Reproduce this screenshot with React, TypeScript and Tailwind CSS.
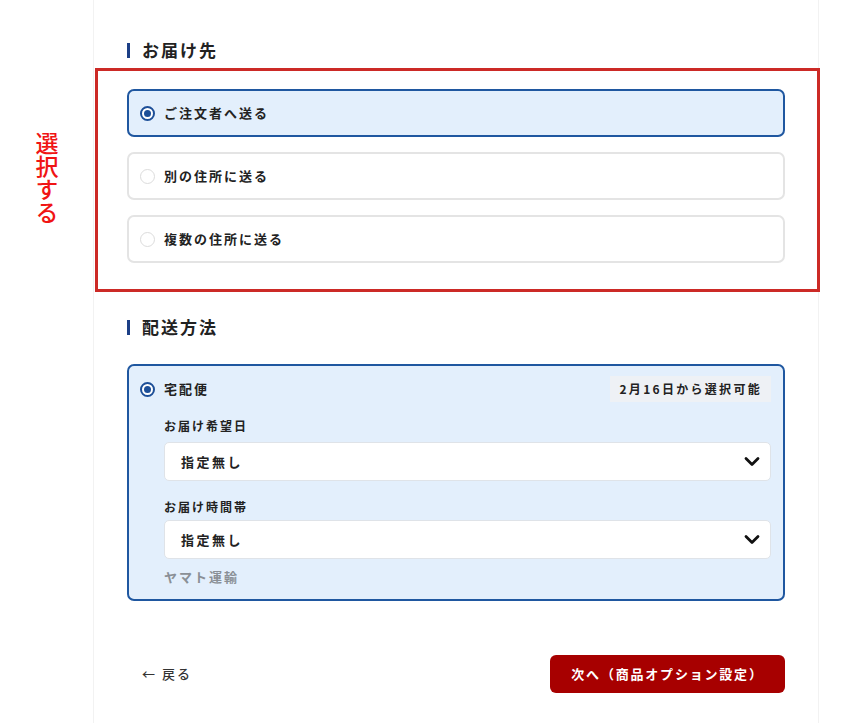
import React from "react";

const font = { fontFamily: '"Noto Sans CJK JP", "Noto Sans", sans-serif' };

function Radio({ checked }: { checked: boolean }) {
  return checked ? (
    <span className="flex h-[15px] w-[15px] items-center justify-center rounded-full border-2 border-[#1d4f98] bg-white">
      <span className="h-[7px] w-[7px] rounded-full bg-[#1d4f98]" />
    </span>
  ) : (
    <span className="h-[15px] w-[15px] rounded-full border border-[#dcdcdc] bg-white" />
  );
}

function Header({ title }: { title: string }) {
  return (
    <div className="flex h-[20px] items-center">
      <span className="h-[15px] w-[3px] bg-[#1c3f86]" />
      <span className="ml-[12px] text-[17px] font-bold tracking-[2px] text-[#222]">{title}</span>
    </div>
  );
}

function Option({ label, checked }: { label: string; checked: boolean }) {
  return (
    <div
      className={
        checked
          ? "flex h-[48px] items-center rounded-[7px] border-2 border-[#1f57a0] bg-[#e3effc] pl-[11px]"
          : "flex h-[48px] items-center rounded-[7px] border-2 border-[#e4e4e4] bg-white pl-[11px]"
      }
    >
      <Radio checked={checked} />
      <span className="ml-[9px] text-[13px] font-bold tracking-[2px] text-[#222]">{label}</span>
    </div>
  );
}

function Chevron() {
  return (
    <svg width="16" height="11" viewBox="0 0 16 11">
      <path d="M2 2.5 L8 8.5 L14 2.5" fill="none" stroke="#111" strokeWidth="2.8" strokeLinecap="round" strokeLinejoin="round" />
    </svg>
  );
}

function Select() {
  return (
    <div className="flex h-[39px] items-center justify-between rounded-[5px] border border-[#dfe3e8] bg-white pl-[16px] pr-[10px]">
      <span className="text-[13px] font-bold tracking-[2.5px] text-[#222]">指定無し</span>
      <Chevron />
    </div>
  );
}

export default function App() {
  return (
    <div className="relative min-h-[723px] w-[866px] bg-white" style={font}>
      <div className="absolute left-[35px] top-[132px] text-[23px] font-medium leading-none tracking-[0px] text-[#f01414] [writing-mode:vertical-rl]">
        選択する
      </div>
      <div className="ml-[93px] min-h-[723px] w-[726px] border-x border-[#f2f2f2] px-[33px] pt-[40px]">
        <Header title="お届け先" />
        <div className="relative mt-[29px] flex flex-col gap-[15px]">
          <div className="pointer-events-none absolute -left-[32px] -right-[35px] -top-[21px] -bottom-[29px] border-[3px] border-[#cc2a26]" />
          <Option label="ご注文者へ送る" checked />
          <Option label="別の住所に送る" checked={false} />
          <Option label="複数の住所に送る" checked={false} />
        </div>

        <div className="mt-[54px]">
          <Header title="配送方法" />
        </div>

        <div className="mt-[27px] rounded-[7px] border-2 border-[#1f57a0] bg-[#e3effc] pb-[13px] pl-[11px] pr-[12px] pt-[10px]">
          <div className="flex h-[26px] items-center justify-between">
            <div className="flex items-center">
              <Radio checked />
              <span className="ml-[9px] text-[13px] font-bold tracking-[2px] text-[#222]">宅配便</span>
            </div>
            <span className="flex h-[26px] items-center bg-[#eef1f5] px-[9px] text-[12px] font-bold tracking-[2.3px] text-[#222]">
              2月16日から選択可能
            </span>
          </div>
          <div className="ml-[24px]">
            <div className="mt-[16px] text-[12px] font-bold leading-[16px] tracking-[2px] text-[#222]">お届け希望日</div>
            <div className="mt-[8px]">
              <Select />
            </div>
            <div className="mt-[18px] text-[12px] font-bold leading-[16px] tracking-[2px] text-[#222]">お届け時間帯</div>
            <div className="mt-[5px]">
              <Select />
            </div>
            <div className="mt-[9px] text-[13px] font-bold leading-[18px] tracking-[2px] text-[#8a8f96]">ヤマト運輸</div>
          </div>
        </div>

        <div className="mt-[54px] flex items-center justify-between pb-[30px]">
          <span className="ml-[15px] text-[13px] font-medium tracking-[2px] text-[#333]">← 戻る</span>
          <button className="h-[38px] w-[235px] rounded-[6px] bg-[#a70000] text-[13px] font-bold tracking-[1.8px] text-white">
            次へ（商品オプション設定）
          </button>
        </div>
      </div>
    </div>
  );
}
